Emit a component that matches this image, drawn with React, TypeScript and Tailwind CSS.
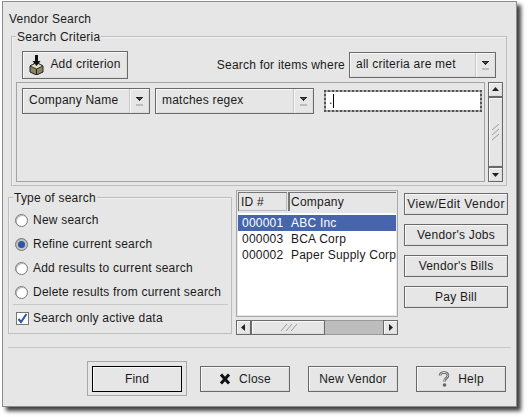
const bevel =
  "bg-[#e6e6e6] border border-[#6a6a6a] shadow-[inset_1px_1px_0_#f8f8f8,inset_-1px_-1px_0_#dcdcdc]";

const DownGlyph = () => (
  <svg width="9" height="11" viewBox="0 0 9 11">
    <path d="M1 1h7v1h-1v1h-1v1h-1v1h-1v-1h-1v-1h-1v-1h-1z" fill="#222" />
    <path d="M3 2h3v1h-3z" fill="#555" />
    <rect x="1" y="8" width="7" height="2" fill="#bdbdbd" />
  </svg>
);

const Combo = ({ label, className, arrowWidth }: { label: string; className: string; arrowWidth: string }) => (
  <div className={`${bevel} ${className} flex shrink-0`}>
    <div className="flex-1 pl-[6px] flex items-center pb-[2px]">{label}</div>
    <div className={`${arrowWidth} border-l border-[#c8c8c8] shadow-[inset_1px_0_0_#f8f8f8] flex items-center justify-center`}>
      <DownGlyph />
    </div>
  </div>
);

const Button = ({ children, className }: { children: React.ReactNode; className: string }) => (
  <div className={`${bevel} ${className} flex items-center justify-center shrink-0 whitespace-nowrap`}>{children}</div>
);

const Legend = ({ text }: { text: string }) => (
  <div className="absolute left-[4px] top-[-7px] h-[14px] bg-[#e6e6e6] px-px leading-[14px]">{text}</div>
);

const Radio = ({ label, checked }: { label: string; checked?: boolean }) => (
  <div className="h-[24px] flex items-center pl-[6px] gap-[5px] whitespace-nowrap">
    <div
      className={`w-[13px] h-[13px] rounded-full border border-[#777] flex items-center justify-center shrink-0 shadow-[inset_1px_1px_0_#bbb] ${
        checked ? "bg-[#c4c4c4]" : "bg-white"
      }`}
    >
      {checked && <div className="w-[7px] h-[7px] rounded-full bg-[#2c55a5]" />}
    </div>
    <span>{label}</span>
  </div>
);

const Grip = ({ horizontal }: { horizontal?: boolean }) =>
  horizontal ? (
    <svg width="17" height="7" viewBox="0 0 17 7">
      <path d="M1 7 7 0M6 7 12 0M11 7 17 0" stroke="#9a9a9a" fill="none" />
    </svg>
  ) : (
    <svg width="8" height="17" viewBox="0 0 8 17">
      <path d="M0 6 7 0M0 11 7 5M0 16 7 10" stroke="#9a9a9a" fill="none" />
    </svg>
  );

const Arrow = ({ d }: { d: string }) => (
  <svg width="9" height="9" viewBox="0 0 9 9">
    <path d={d} fill="#222" />
  </svg>
);

const Row = ({ id, name, selected }: { id: string; name: string; selected?: boolean }) => (
  <div className={`h-[16px] flex items-center whitespace-nowrap overflow-hidden ${selected ? "bg-[#4665ad] text-white" : ""}`}>
    <span className="w-[50px] pl-[4px] shrink-0">{id}</span>
    <span className="pl-[3px]">{name}</span>
  </div>
);

export default function App() {
  return (
    <div className="w-[528px] h-[417px] bg-white overflow-hidden pt-px pl-[2px] text-[12px] text-[#1a1a1a] font-['Liberation_Sans',Arial,sans-serif] tracking-[0.22px]">
      <div className="w-[515px] h-[406px] bg-[#e6e6e6] border border-[#8c8c8c] shadow-[4px_4px_4px_#404040]">
        <div className="h-[34px] pl-[6px] flex items-center">Vendor Search</div>

        {/* search criteria */}
        <div className="relative ml-[8px] w-[496px] h-[150px] border border-[#bdbdbd] shadow-[inset_1px_1px_0_#f2f2f2]">
          <Legend text="Search Criteria" />
          <div className="flex items-center pl-[10px] pr-[10px] pt-[14px]">
            <Button className="w-[106px] h-[28px] gap-[6px]">
              <svg width="15" height="20" viewBox="0 0 15 20">
                <path d="M1 11 7.5 7.5 14 11v6l-6.5 3L1 17z" fill="#8a8460" stroke="#222" />
                <path d="M1 11l6.5 3 6.5-3-6.500-3.500z" fill="#e2dcc0" stroke="#333" />
                <path d="M7.500 14v6" stroke="#222" />
                <path d="M6 0h3v6h2.500l-4 5-4-5H6z" fill="#111" />
              </svg>
              <span className="pb-[2px]">Add criterion</span>
            </Button>
            <div className="ml-auto pr-[4px]">Search for items where</div>
            <Combo label="all criteria are met" className="w-[147px] h-[26px]" arrowWidth="w-[20px]" />
          </div>
          <div className="flex pl-[4px] mt-[3px]">
            <div className="w-[469px] h-[100px] border border-[#a4a4a4] pl-[5px] pt-[5px] flex items-start">
              <Combo label="Company Name" className="w-[128px] h-[26px]" arrowWidth="w-[20px]" />
              <Combo label="matches regex" className="ml-[5px] w-[159px] h-[26px]" arrowWidth="w-[20px]" />
              <div className="ml-[10px] mt-[2px] w-[158px] h-[22px] bg-[#aaa] shrink-0">
                <div className="w-full h-full bg-white bg-clip-padding border-2 border-dotted border-[#555] flex items-center pl-[3px]">
                  <span className="pb-[2px]">.</span>
                  <div className="w-px h-[14px] bg-black" />
                </div>
              </div>
            </div>
            <div className="ml-[3px] w-[15px] h-[100px] flex flex-col">
              <Button className="h-[15px]">
                <Arrow d="M4.500 2 8 6H1z" />
              </Button>
              <Button className="flex-1">
                <Grip />
              </Button>
              <Button className="h-[15px]">
                <Arrow d="M1 3h7L4.500 7z" />
              </Button>
            </div>
          </div>
        </div>

        {/* type of search, results, actions */}
        <div className="flex items-start pl-[5px] mt-[4px]">
          <div className="relative mt-[7px] w-[224px] h-[137px] border border-[#bdbdbd] pt-[10px] shadow-[inset_1px_1px_0_#f2f2f2]">
            <Legend text="Type of search" />
            <Radio label="New search" />
            <Radio label="Refine current search" checked />
            <Radio label="Add results to current search" />
            <Radio label="Delete results from current search" />
            <div className="ml-[4px] w-[215px] h-px bg-[#c8c8c8]" />
            <div className="h-[26px] flex items-center pl-[7px] gap-[4px]">
              <div className="w-[13px] h-[13px] bg-white border border-[#777] flex items-center justify-center">
                <svg width="11" height="11" viewBox="0 0 11 11">
                  <path d="M1.500 6 4 9 9.500 1" stroke="#2c55a5" strokeWidth="2" fill="none" />
                </svg>
              </div>
              <span>Search only active data</span>
            </div>
          </div>

          <div className="ml-[4px] w-[162px]">
            <div className="h-[127px] bg-white border border-[#a8a8a8] shadow-[inset_0_0_0_1px_#e6e6e6] p-px flex flex-col">
              <div className="h-[21px] flex gap-px bg-[#e6e6e6] shrink-0 pb-[2px]">
                <div className="w-[49px] border-t border-l border-[#777] shadow-[inset_-1px_-1px_0_#bbb] pl-[2px] flex items-center">ID #</div>
                <div className="flex-1 border-t border-l-2 border-[#777] pl-px flex items-center">Company</div>
              </div>
              <div className="h-[2px] shrink-0" />
              <Row id="000001" name="ABC Inc" selected />
              <Row id="000003" name="BCA Corp" />
              <Row id="000002" name="Paper Supply Corp" />
            </div>
            <div className="mt-[3px] h-[15px] flex bg-[#bdbdbd] border-y border-[#999]">
              <Button className="w-[15px] -my-px">
                <Arrow d="M2 4.500 6 1v7z" />
              </Button>
              <Button className="w-[74px] -my-px">
                <Grip horizontal />
              </Button>
              <div className="flex-1" />
              <Button className="w-[15px] -my-px">
                <Arrow d="M7 4.500 3 1v7z" />
              </Button>
            </div>
          </div>

          <div className="ml-[6px] mt-[3px] w-[104px] flex flex-col gap-[9px]">
            <Button className="h-[22px] tracking-[0.4px]">View/Edit Vendor</Button>
            <Button className="h-[22px]">Vendor's Jobs</Button>
            <Button className="h-[22px]">Vendor's Bills</Button>
            <Button className="h-[22px]">Pay Bill</Button>
          </div>
        </div>

        <div className="mt-[12px] ml-[5px] w-[503px] h-px bg-[#c8c8c8]" />

        {/* bottom buttons */}
        <div className="flex items-center pl-[84px] mt-[13px]">
          <div className="w-[100px] h-[35px] border border-[#a8a8a8] flex items-center justify-center shrink-0">
            <div className="w-[90px] h-[26px] border border-black shadow-[inset_1px_1px_0_#f8f8f8] flex items-center justify-center">Find</div>
          </div>
          <Button className="ml-[13px] w-[90px] h-[26px] gap-[8px]">
            <svg width="12" height="12" viewBox="0 0 12 12">
              <path d="M2 1.500 10 10.500M10 1.500 2 10.500" stroke="#111" strokeWidth="3" fill="none" />
            </svg>
            Close
          </Button>
          <Button className="ml-[18px] w-[90px] h-[26px]">New Vendor</Button>
          <Button className="ml-[18px] w-[90px] h-[26px] gap-[8px]">
            <svg width="12" height="16" viewBox="0 0 12 16">
              <path d="M2 4.500C2 2.500 3.800 1.500 6 1.500s4 1.200 4 3c0 2.500-3.500 2.500-3.500 6" stroke="#555" strokeWidth="2.600" fill="none" />
              <path d="M2 4.500C2 2.500 3.800 1.500 6 1.500s4 1.200 4 3c0 2.500-3.500 2.500-3.500 6" stroke="#e8e8e8" strokeWidth="1" fill="none" />
              <circle cx="6.500" cy="14" r="1.800" fill="#666" />
            </svg>
            Help
          </Button>
        </div>
      </div>
    </div>
  );
}
